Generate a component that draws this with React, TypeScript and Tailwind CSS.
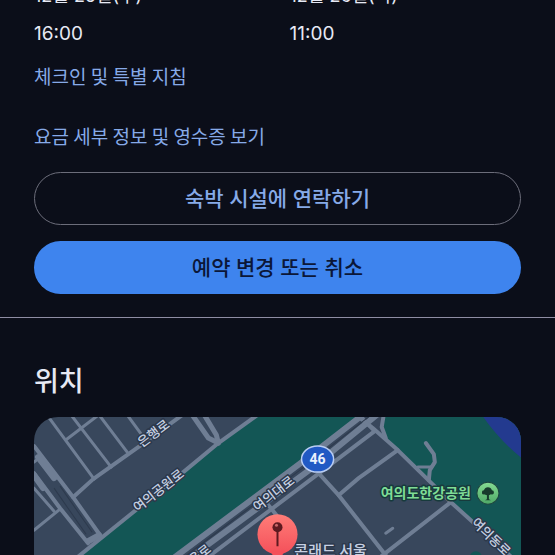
import { FC, ReactNode } from "react";

interface StayDateProps {
  date: string;
  time: string;
}

const StayDate: FC<StayDateProps> = ({ date, time }) => {
  return (
    <div className="flex-1">
      <dt className="text-lg leading-7">{date}</dt>
      <dd className="mt-2.5 text-[19px] leading-7">{time}</dd>
    </div>
  );
};

const TextLink: FC<{ href: string; children: ReactNode }> = ({
  href,
  children,
}) => {
  return (
    <a
      href={href}
      className="block w-fit font-['Noto_Sans_CJK_KR',sans-serif] text-[19px] leading-7 text-[#86aae8]"
    >
      {children}
    </a>
  );
};

// streets: [path, width]
const streets: [string, number][] = [
  ["M73 497 L93 479 L138 447 L182 415", 4],
  ["M47 415 L94 479", 3],
  ["M71 415 L111 467", 3],
  ["M99 415 L127 452", 3],
  ["M127 415 L141 434", 3],
  ["M67 439 L97 416", 3],
  ["M34 446 L73 497 L100 535", 4],
  ["M34 473 L60 508 L88 543", 4],
  ["M34 488 L54 511", 3],
  ["M34 530 L60 509", 3],
  ["M34 462 L40 457", 3],
  ["M38 457 L54 478", 6],
  ["M34 475 L43 488", 6],
  ["M88 541 L99 535", 6],
  ["M76 558 L133 512 L183 472 L218 443 L257 415", 4],
  ["M192 415 L208 438 L218 443", 5],
  ["M204 415 L216 435 L218 443", 5],
  ["M173 558 L300 463 L362 415", 6],
  ["M189 558 L310 469 L376 415", 6],
  ["M206 558 L316 475 L374 431", 4],
  ["M356 413 L374 431", 4],
  ["M268 505 L276 515", 4],
  ["M318 473 L338 495 L385 555", 4],
  ["M338 495 L358 478 L397 450", 4],
  ["M353 413 L372 428 L397 450 L450 502 L514 560", 4],
  ["M383 415 L381 427 L385 438", 4],
  ["M450 502 L378 558", 4],
  ["M425 443 L433 454 L434 462 L429 470 L428 480", 4],
  ["M417 467 L430 467", 3],
  ["M385 533 L392 528", 3],
];

// thin dark gaps between the lanes of the wide avenues
const lanes = ["M60 486 L92 532", "M54 488 L86 534", "M182 558 L306 465 L369 416"];

const LocationMap: FC = () => {
  return (
    <svg
      viewBox="34 417 486 200"
      className="block w-full"
      role="img"
      aria-label="지도"
    >
      <defs>
        <linearGradient id="pin" x1="0" y1="0" x2="0" y2="1">
          <stop offset="0" stopColor="#ff7d78" />
          <stop offset="1" stopColor="#f4505a" />
        </linearGradient>
        <linearGradient id="park" x1="0" y1="0" x2="0" y2="1">
          <stop offset="0" stopColor="#86dc93" />
          <stop offset="1" stopColor="#4ea866" />
        </linearGradient>
      </defs>
      <rect x="34" y="417" width="486" height="200" fill="#38475c" />
      <path d="M256 415 L362 415 L174 558 L76 558 Z" fill="#135655" />
      <path
        d="M382 415 L381 436 L397 450 L450 502 L522 566 L522 415 Z"
        fill="#135655"
      />
      <path d="M481 415 Q498 440 522 459 L522 415 Z" fill="#233a8f" />
      <circle cx="475" cy="557" r="6" fill="#135655" />

      <g
        fill="none"
        stroke="#6f7e94"
        strokeLinejoin="round"
        strokeLinecap="round"
      >
        {streets.map(([d, width]) => (
          <path key={d} d={d} strokeWidth={width} />
        ))}
      </g>
      <g fill="none" stroke="#2d3a4d">
        {lanes.map((d) => (
          <path key={d} d={d} />
        ))}
      </g>

      <g
        className="font-['Noto_Sans_CJK_KR',sans-serif] font-medium"
        fontSize="13"
        textAnchor="middle"
        fill="#c6d0e2"
        stroke="#2b384b"
        strokeWidth="3"
        strokeLinejoin="round"
        paintOrder="stroke"
      >
        <text transform="translate(156 437) rotate(-37)">은행로</text>
        <text transform="translate(161 494) rotate(-38)">여의공원로</text>
        <text transform="translate(276 497) rotate(-38)">여의대로</text>
        <text transform="translate(188 569) rotate(-38)">국제금융로</text>
        <text transform="translate(487 540) rotate(44)">여의동로</text>
        <text x="330" y="556" fontSize="15">
          콘래드 서울
        </text>
        <text
          x="425"
          y="498"
          fontSize="14"
          fill="#7fdc96"
          stroke="#173a3c"
          className="font-bold"
        >
          여의도한강공원
        </text>
      </g>

      <ellipse
        cx="317"
        cy="459"
        rx="16"
        ry="13"
        fill="#2159c4"
        stroke="#b9cdf3"
        strokeWidth="1.5"
      />
      <text
        x="317"
        y="464"
        fontSize="14"
        textAnchor="middle"
        fill="#eaf0fd"
        className="font-['Roboto',sans-serif] font-bold"
      >
        46
      </text>

      <circle cx="487" cy="493" r="11" fill="url(#park)" stroke="#1d4741" />
      <path
        d="M486 495 L483 494 Q481 495 481 492 Q481 490 483 490 Q484 487 487 487 Q490 487 491 490 Q493 490 493 492 Q493 495 490 494 L488 495 L488 499 L490 500 L484 500 L486 499 Z"
        fill="#173b2c"
      />

      <circle cx="277" cy="534" r="20" fill="url(#pin)" />
      <path d="M269 550 L277 562 L285 550 Z" fill="#f4505a" />
      <path d="M277 528 L277 546" stroke="#5e1a20" strokeWidth="2" />
      <circle cx="277" cy="527" r="5" fill="#5e1a20" />
      <circle cx="276" cy="525" r="1.5" fill="#c9686a" />
    </svg>
  );
};

const App: FC = () => {
  return (
    <main className="h-screen overflow-hidden bg-[#0b0e19] font-['Inter','Noto_Sans_CJK_KR',sans-serif] text-[#e6e9f4]">
      <section className="-mt-[18px] border-b border-[#8f8da3] px-[34px] pb-[23px]">
        <dl className="flex gap-6">
          <StayDate date="12월 25일(수)" time="16:00" />
          <StayDate date="12월 26일(목)" time="11:00" />
        </dl>
        <div className="mt-3.5 space-y-8">
          <TextLink href="#guide">체크인 및 특별 지침</TextLink>
          <TextLink href="#receipt">요금 세부 정보 및 영수증 보기</TextLink>
        </div>
        <div className="mt-[22px] space-y-4 text-[21px] font-medium">
          <button className="block h-[53px] w-full rounded-full border border-[#6c6d7a] text-[#86aae8]">
            숙박 시설에 연락하기
          </button>
          <button className="block h-[53px] w-full rounded-full bg-[#3e84ee] text-[#0b1738]">
            예약 변경 또는 취소
          </button>
        </div>
      </section>

      <section className="px-[34px] pt-11">
        <h2 className="text-[27px] leading-10 font-medium">위치</h2>
        <div className="mt-[15px] overflow-hidden rounded-3xl">
          <LocationMap />
        </div>
      </section>
    </main>
  );
};

export default App;
